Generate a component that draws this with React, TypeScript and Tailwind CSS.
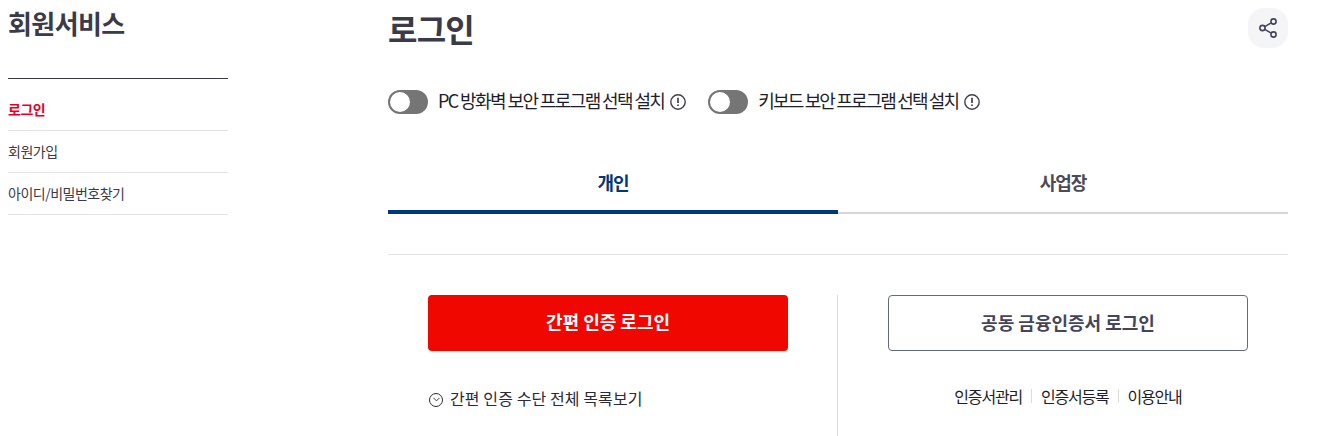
import { ChevronDown } from "lucide-react";

const FONT = "[font-family:'Noto_Sans_CJK_KR','Noto_Sans',sans-serif]";

const sideMenu = [
  { label: "로그인", active: true },
  { label: "회원가입", active: false },
  { label: "아이디/비밀번호찾기", active: false },
];

const InfoIcon = () => (
  <svg width="16" height="16" viewBox="0 0 16 16" fill="none" stroke="#3f3f50" strokeWidth="1.4">
    <circle cx="8" cy="8" r="7.2" />
    <path d="M8 3.8v5.2" strokeWidth="1.7" />
    <path d="M8 10.4v1.7" strokeWidth="1.7" />
  </svg>
);

const ShareIcon = () => (
  <svg width="20" height="20" viewBox="0 0 20 20" fill="none" stroke="#45455a" strokeWidth="1.6">
    <circle cx="15.5" cy="3.5" r="2.6" />
    <circle cx="4.5" cy="10" r="2.6" />
    <circle cx="15.5" cy="16.5" r="2.6" />
    <path d="M13.2 4.9 6.8 8.6M6.8 11.4l6.4 3.7" />
  </svg>
);

const Toggle = ({ label, tracking }: { label: string; tracking: string }) => (
  <div className="flex items-center">
    <span className="flex h-6 w-10 items-center rounded-full bg-[#757575] pl-[2px]">
      <span className="h-5 w-5 rounded-full bg-white" />
    </span>
    <span className={`ml-[10px] h-6 text-[18px] leading-5 text-[#1e1e2a] ${tracking}`}>{label}</span>
    <span className="ml-[6px]">
      <InfoIcon />
    </span>
  </div>
);

export default function App() {
  return (
    <div className={`flex h-[436px] w-[1319px] overflow-hidden bg-white pl-2 ${FONT}`}>
      <aside className="w-[220px] shrink-0">
        <h2 className="h-[79px] border-b border-[#3a3a4a] pt-[5px] text-[26px] leading-9 font-bold tracking-[-0.6px] text-[#3a3a48]">
          회원서비스
        </h2>
        <ul className="pt-[10px]">
          {sideMenu.map((item) => (
            <li
              key={item.label}
              className={`flex h-[42px] items-center border-b border-[#e3e3e3] pb-px text-sm tracking-[-0.5px] ${
                item.active ? "font-bold text-[#e4002b]" : "text-[#3a3a48]"
              }`}
            >
              {item.label}
            </li>
          ))}
        </ul>
      </aside>

      <main className="ml-40 w-[900px] shrink-0">
        <div className="flex h-[56px] items-start justify-between pt-2">
          <h1 className="text-[32px] leading-10 font-bold tracking-[-0.8px] text-[#3a3a48]">로그인</h1>
          <button className="flex h-10 w-10 items-center justify-center rounded-2xl bg-[#f5f5f7]">
            <ShareIcon />
          </button>
        </div>

        <div className="mt-[34px] flex gap-[22px]">
          <Toggle label="PC 방화벽 보안 프로그램 선택 설치" tracking="tracking-[-1.6px]" />
          <Toggle label="키보드 보안 프로그램 선택 설치" tracking="tracking-[-1.85px]" />
        </div>

        <div className="mt-[34px] flex">
          <div className="flex h-[66px] w-1/2 items-center justify-center border-b-4 border-[#00377a] pt-[7px] text-[18px] font-bold tracking-[-1px] text-[#00377a]">
            개인
          </div>
          <div className="flex h-[66px] w-1/2 items-center justify-center border-b-2 border-[#d6d6d6] pt-[5px] text-[18px] font-bold tracking-[-1px] text-[#4a4a58]">
            사업장
          </div>
        </div>

        <div className="mt-10 flex border-t border-[#e3e3e3] pt-10">
          <div className="h-[142px] w-[450px] border-r border-[#dcdcdc] pl-10">
            <button className="h-14 w-[360px] rounded bg-[#f00800] pb-1 text-[18px] font-bold text-white">
              간편 인증 로그인
            </button>
            <div className="mt-[37px] flex items-center text-base leading-5 tracking-[0.1px] text-[#2a2a36]">
              <span className="mt-[3px] ml-[1px] flex h-[14px] w-[14px] items-center justify-center rounded-full border-[1.5px] border-[#2a2a36]">
                <ChevronDown size={11} strokeWidth={2} />
              </span>
              <span className="ml-[7px]">간편 인증 수단 전체 목록보기</span>
            </div>
          </div>
          <div className="pl-[50px]">
            <button className="h-14 w-[360px] rounded border border-[#636b7a] pb-[2px] text-[18px] font-bold text-[#45455a]">
              공동 금융인증서 로그인
            </button>
            <div className="mt-[35px] flex items-center justify-center text-base leading-5 tracking-[-1.2px] text-[#1e1e2a]">
              <span>인증서관리</span>
              <span className="mx-[9px] h-[14px] w-px bg-[#dcdcdc]" />
              <span>인증서등록</span>
              <span className="mx-[9px] h-[14px] w-px bg-[#dcdcdc]" />
              <span>이용안내</span>
            </div>
          </div>
        </div>
      </main>
    </div>
  );
}
